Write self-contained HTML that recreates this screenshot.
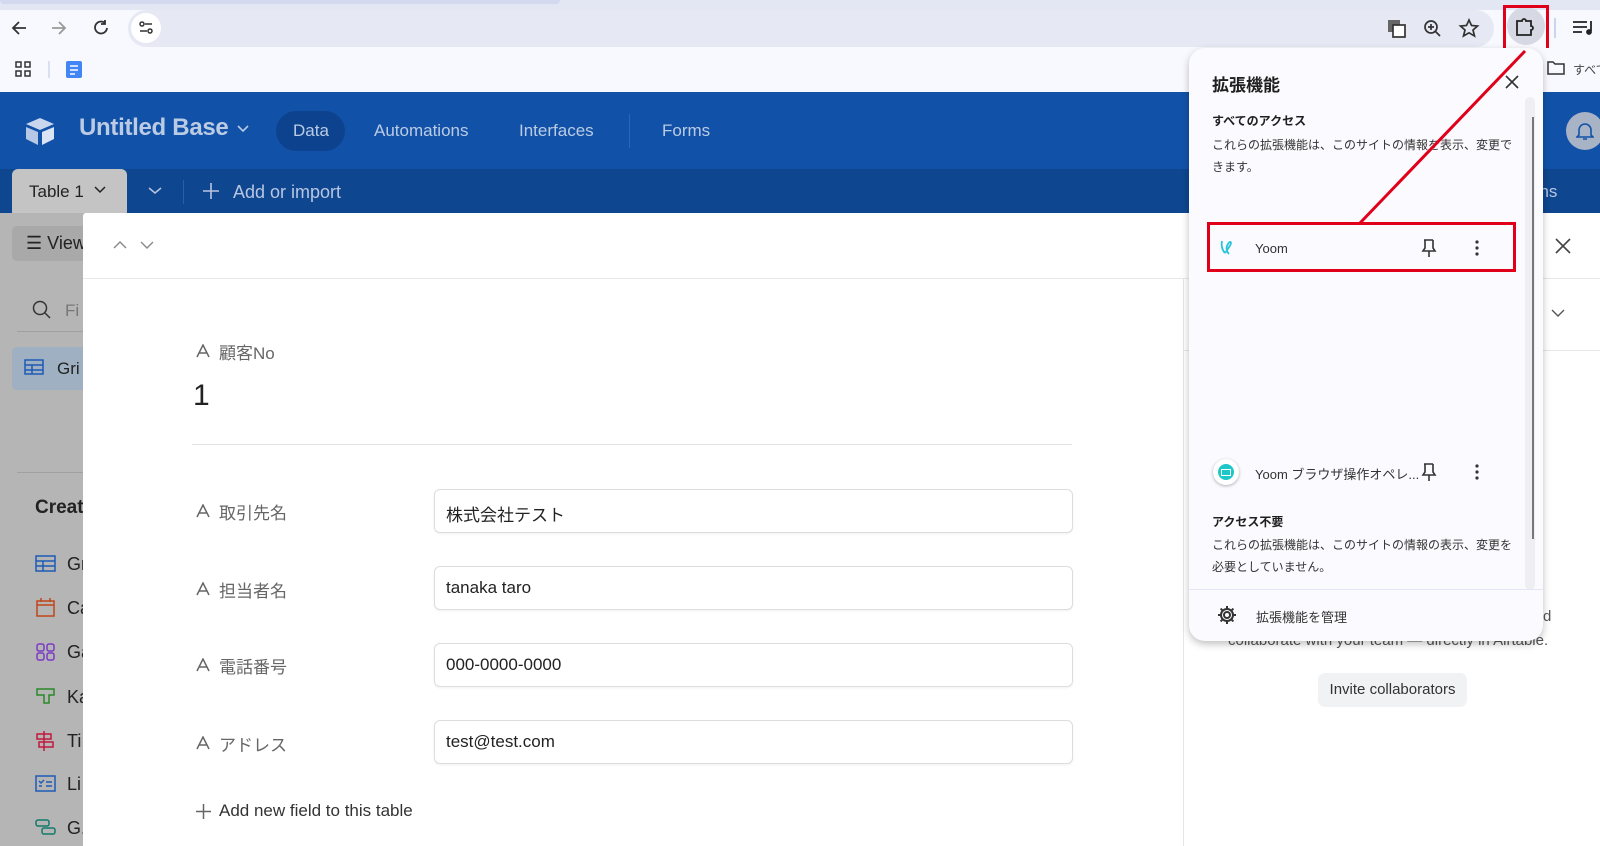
<!DOCTYPE html>
<html><head><meta charset="utf-8"><style>
*{margin:0;padding:0;box-sizing:border-box}
body{width:1600px;height:846px;overflow:hidden;position:relative;background:#bcbcbc;font-family:"Liberation Sans","Noto Sans CJK JP",sans-serif;}
.a{position:absolute}
.jp{font-family:"Liberation Sans","Noto Sans CJK JP",sans-serif}
.lbl{position:absolute;left:196px;font-size:17px;color:#666;display:flex;align-items:center;gap:8px}
.inp{position:absolute;left:434px;width:639px;height:44px;border:1px solid #ddd;border-radius:6px;background:#fff;font-size:17px;color:#222;padding:11px 11px;box-shadow:0 1px 2px rgba(0,0,0,.06)}
.si{position:absolute;left:35px;font-size:18px;color:#222}
</style></head><body>
<div class="a" style="left:0;top:0;width:1600px;height:10px;background:#e3e7f3"></div>
<div class="a" style="left:0;top:0;width:560px;height:4px;background:#d3d9ee;border-radius:0 0 8px 8px"></div>
<div class="a" style="left:0;top:10px;width:1600px;height:38px;background:#f8f9fe"></div>
<svg class="a" style="left:10px;top:18px" width="110" height="20" fill="none" stroke="#333" stroke-width="1.8">
<path d="M16 10H3M9 4L3 10l6 6"/><path d="M42 10h13M49 4l6 6-6 6" stroke="#999"/><path d="M95 5a6 6 0 1 0 2 5M95 2v4h-4"/></svg>
<div class="a" style="left:128px;top:10px;width:1366px;height:37px;background:#e6e9f4;border-radius:19px"></div>
<div class="a" style="left:131px;top:13px;width:30px;height:30px;background:#fff;border-radius:15px"></div>
<svg class="a" style="left:137px;top:19px" width="18" height="18" fill="none" stroke="#333" stroke-width="1.5"><circle cx="5" cy="5" r="2"/><path d="M8 5h7M3 12h7"/><circle cx="13" cy="12" r="2"/></svg>
<svg class="a" style="left:1386px;top:18px" width="100" height="22" fill="none" stroke="#333" stroke-width="1.7">
<rect x="2" y="2" width="12" height="12" fill="#666" stroke="none"/><rect x="7" y="7" width="12" height="12" fill="#fff"/>
<circle cx="45" cy="9" r="6"/><path d="M49 13l5 5M45 6v6M42 9h6"/>
<path d="M83 2l2.5 5.5 6 .5-4.5 4 1.5 6-5.5-3.2-5.5 3.2 1.5-6-4.5-4 6-.5z"/></svg>
<div class="a" style="left:1507px;top:7px;width:38px;height:38px;border-radius:19px;background:#d6d9e3"></div>
<svg class="a" style="left:1514px;top:16px" width="24" height="22" fill="none" stroke="#222" stroke-width="1.8"><path d="M3 5h5a2 2 0 0 1 4 0h5v5a2 2 0 0 1 0 4v5H3z"/></svg>
<div class="a" style="left:1503px;top:5px;width:46px;height:46px;border:3px solid #e0001a"></div>
<div class="a" style="left:1554px;top:18px;width:2px;height:20px;background:#c9d4f0"></div>
<svg class="a" style="left:1572px;top:19px" width="24" height="18" fill="none" stroke="#222" stroke-width="1.8"><path d="M1 3h14M1 8h14M1 13h9M19 2v10"/><circle cx="17" cy="13" r="2" fill="#222"/></svg>
<div class="a" style="left:0;top:48px;width:1600px;height:44px;background:#f8f9fe"></div>
<svg class="a" style="left:15px;top:61px" width="80" height="18" fill="none" stroke="#333" stroke-width="1.5"><rect x="1" y="1" width="5" height="5"/><rect x="10" y="1" width="5" height="5"/><rect x="1" y="10" width="5" height="5"/><rect x="10" y="10" width="5" height="5"/><path d="M34 0v17" stroke="#cfd8ee"/><rect x="51" y="0" width="16" height="17" rx="2" fill="#4285f4" stroke="none"/><path d="M55 5h8M55 9h8M55 13h5" stroke="#fff"/></svg>
<svg class="a" style="left:1546px;top:60px" width="20" height="16" fill="none" stroke="#333" stroke-width="1.5"><path d="M2 2h5l2 2h9v10H2z"/></svg>
<div class="a jp" style="left:1573px;top:61px;font-size:12px;color:#444;white-space:nowrap">すべて</div>
<div class="a" style="left:0;top:92px;width:1600px;height:78px;background:#1152a8"></div>
<svg class="a" style="left:24px;top:116px" width="32" height="30"><path d="M16 2L30 8 16 14 2 8z" fill="#c9d6ee"/><path d="M2 11l12 5v13L2 23z" fill="#b7c7e6"/><path d="M18 16l12-5v12l-12 6z" fill="#dbe4f4"/></svg>
<div class="a" style="left:79px;top:114px;font-size:24px;font-weight:bold;color:#bccbe4;letter-spacing:-.3px">Untitled Base</div>
<svg class="a" style="left:236px;top:124px" width="14" height="10" fill="none" stroke="#bccbe4" stroke-width="1.6"><path d="M2 2l5 5 5-5"/></svg>
<div class="a" style="left:276px;top:111px;width:69px;height:40px;border-radius:20px;background:#0d438e"></div>
<div class="a" style="left:293px;top:121px;font-size:17px;color:#bccbe4">Data</div>
<div class="a" style="left:374px;top:121px;font-size:17px;color:#bccbe4">Automations</div>
<div class="a" style="left:519px;top:121px;font-size:17px;color:#bccbe4">Interfaces</div>
<div class="a" style="left:629px;top:114px;width:1px;height:34px;background:#2d66b4"></div>
<div class="a" style="left:662px;top:121px;font-size:17px;color:#bccbe4">Forms</div>
<div class="a" style="left:1566px;top:112px;width:38px;height:38px;border-radius:19px;background:#a8b3c6"></div>
<svg class="a" style="left:1576px;top:121px" width="18" height="20" fill="none" stroke="#1152a8" stroke-width="1.6"><path d="M3 14V9a6 6 0 0 1 12 0v5l2 2H1zM7 18h4"/></svg>
<div class="a" style="left:0;top:169px;width:1600px;height:44px;background:#0e4690"></div>
<div class="a" style="left:12px;top:169px;width:115px;height:45px;background:#c4c4c4;border-radius:6px 6px 0 0"></div>
<div class="a" style="left:29px;top:182px;font-size:17px;color:#222">Table 1</div>
<svg class="a" style="left:94px;top:186px" width="12" height="8" fill="none" stroke="#222" stroke-width="1.5"><path d="M1 1l5 5 5-5"/></svg>
<svg class="a" style="left:148px;top:187px" width="14" height="8" fill="none" stroke="#b8c6e2" stroke-width="1.5"><path d="M1 1l6 5 6-5"/></svg>
<div class="a" style="left:183px;top:180px;width:1px;height:24px;background:#2a5fa8"></div>
<svg class="a" style="left:202px;top:182px" width="18" height="18" stroke="#b8c6e2" stroke-width="1.6"><path d="M9 1v16M1 9h16"/></svg>
<div class="a" style="left:233px;top:182px;font-size:18px;color:#b8c6e2">Add or import</div>
<div class="a" style="left:1530px;top:182px;font-size:17px;color:#b8c6e2">ons</div>
<div class="a" style="left:0;top:213px;width:84px;height:633px;background:#b5b5b5"></div>
<div class="a" style="left:12px;top:226px;width:80px;height:35px;background:#a9a9a9;border-radius:5px"></div>
<div class="a" style="left:26px;top:233px;font-size:18px;color:#222">☰ View</div>
<svg class="a" style="left:32px;top:300px" width="20" height="20" fill="none" stroke="#333" stroke-width="1.5"><circle cx="8" cy="8" r="6.5"/><path d="M13 13l5 5"/></svg>
<div class="a" style="left:65px;top:301px;font-size:17px;color:#777">Fi</div>
<div class="a" style="left:17px;top:331px;width:70px;height:1px;background:#a0a0a0"></div>
<div class="a" style="left:12px;top:347px;width:80px;height:43px;background:#9eb0c2;border-radius:5px"></div>
<svg class="a" style="left:24px;top:359px" width="20" height="16" fill="none" stroke="#1d5bb5" stroke-width="1.5"><rect x="1" y="1" width="18" height="14"/><path d="M1 6h18M1 11h18M8 6v9"/></svg>
<div class="a" style="left:57px;top:359px;font-size:17px;color:#222">Gri</div>
<div class="a" style="left:17px;top:472px;width:70px;height:1px;background:#a0a0a0"></div>
<div class="a" style="left:35px;top:497px;font-size:19px;font-weight:bold;color:#222">Creat</div>
<svg class="a" style="left:35px;top:555px" width="22" height="290" fill="none" stroke-width="1.5">
<g stroke="#1d5bb5"><rect x="1" y="1" width="19" height="15"/><path d="M1 6h19M1 11h19M8 6v10"/></g>
<g stroke="#c0461a" transform="translate(0,43)"><rect x="2" y="3" width="17" height="15"/><path d="M2 7h17M6 0v4M15 0v4"/></g>
<g stroke="#7a3bc4" transform="translate(0,88)"><rect x="2" y="1" width="7" height="7" rx="2"/><rect x="12" y="1" width="7" height="7" rx="2"/><rect x="2" y="10" width="7" height="7" rx="2"/><rect x="12" y="10" width="7" height="7" rx="2"/></g>
<g stroke="#2a8a2a" transform="translate(0,132)"><path d="M2 2h17v6h-5v8h-5V8H2z"/></g>
<g stroke="#c0183c" transform="translate(0,176)"><path d="M9 0v20M2 3h14v5H2zM4 11h14v5H4z"/></g>
<g stroke="#1d5bb5" transform="translate(0,220)"><rect x="1" y="1" width="19" height="15"/><path d="M4 6l2 2 3-3M11 7h6M4 11h3M11 11h6"/></g>
<g stroke="#137a6a" transform="translate(0,264)"><rect x="1" y="1" width="13" height="6" rx="2"/><rect x="7" y="9" width="13" height="6" rx="2"/></g>
</svg>
<div class="si" style="left:67px;top:554px">Gr</div><div class="si" style="left:67px;top:598px">Ca</div><div class="si" style="left:67px;top:642px">Ga</div><div class="si" style="left:67px;top:687px">Ka</div><div class="si" style="left:67px;top:731px">Ti</div><div class="si" style="left:67px;top:774px">Li</div><div class="si" style="left:67px;top:818px">G.</div>
<div class="a" style="left:83px;top:213px;width:1517px;height:633px;background:#fff;border-top-left-radius:3px"></div>
<div class="a" style="left:83px;top:278px;width:1517px;height:1px;background:#e8e8e8"></div>
<svg class="a" style="left:113px;top:240px" width="45" height="10" fill="none" stroke="#888" stroke-width="1.4"><path d="M1 8l6-6 6 6M28 2l6 6 6-6"/></svg>
<svg class="a" style="left:1555px;top:238px" width="16" height="16" stroke="#444" stroke-width="1.6"><path d="M1 1l14 14M15 1L1 15"/></svg>
<div class="a" style="left:1183px;top:279px;width:1px;height:567px;background:#e6e6e6"></div>
<div class="a" style="left:1183px;top:350px;width:417px;height:1px;background:#e6e6e6"></div>
<svg class="a" style="left:1551px;top:309px" width="14" height="8" fill="none" stroke="#555" stroke-width="1.4"><path d="M1 1l6 6 6-6"/></svg>
<svg class="a" style="left:196px;top:344px" width="14" height="14" fill="none" stroke="#666" stroke-width="1.5"><path d="M1 13L7 1l6 12M3 9h8"/></svg>
<div class="a jp" style="left:219px;top:339px;font-size:17px;color:#666">顧客No</div>
<div class="a" style="left:193px;top:379px;font-size:30px;color:#222">1</div>
<div class="a" style="left:192px;top:444px;width:880px;height:1px;background:#e2e2e2"></div>
<svg class="a" style="left:196px;top:504px" width="14" height="14" fill="none" stroke="#666" stroke-width="1.5"><path d="M1 13L7 1l6 12M3 9h8"/></svg>
<div class="a jp" style="left:219px;top:499px;font-size:17px;color:#666">取引先名</div>
<div class="inp jp" style="top:489px">株式会社テスト</div>
<svg class="a" style="left:196px;top:582px" width="14" height="14" fill="none" stroke="#666" stroke-width="1.5"><path d="M1 13L7 1l6 12M3 9h8"/></svg>
<div class="a jp" style="left:219px;top:577px;font-size:17px;color:#666">担当者名</div>
<div class="inp" style="top:566px">tanaka taro</div>
<svg class="a" style="left:196px;top:658px" width="14" height="14" fill="none" stroke="#666" stroke-width="1.5"><path d="M1 13L7 1l6 12M3 9h8"/></svg>
<div class="a jp" style="left:219px;top:653px;font-size:17px;color:#666">電話番号</div>
<div class="inp" style="top:643px">000-0000-0000</div>
<svg class="a" style="left:196px;top:736px" width="14" height="14" fill="none" stroke="#666" stroke-width="1.5"><path d="M1 13L7 1l6 12M3 9h8"/></svg>
<div class="a jp" style="left:219px;top:731px;font-size:17px;color:#666">アドレス</div>
<div class="inp" style="top:720px">test@test.com</div>
<svg class="a" style="left:195px;top:803px" width="17" height="17" stroke="#666" stroke-width="1.5"><path d="M8.5 1v15M1 8.5h15"/></svg>
<div class="a" style="left:219px;top:801px;font-size:17px;color:#333">Add new field to this table</div>
<div class="a" style="left:1543px;top:608px;font-size:15px;color:#555">d</div>
<div class="a" style="left:1228px;top:632px;font-size:15px;color:#555">collaborate with your team — directly in Airtable.</div>
<div class="a" style="left:1318px;top:673px;width:149px;height:34px;background:#f1f2f4;border-radius:7px;font-size:15px;color:#333;text-align:center;line-height:34px">Invite collaborators</div>
<div class="a" style="left:1189px;top:48px;width:354px;height:593px;background:#fbfaff;border-radius:16px;box-shadow:0 3px 8px rgba(0,0,0,.25)"></div>
<div class="a jp" style="left:1212px;top:71px;font-size:17px;font-weight:bold;color:#1f1f1f">拡張機能</div>
<svg class="a" style="left:1505px;top:75px" width="14" height="14" stroke="#333" stroke-width="1.6"><path d="M1 1l12 12M13 1L1 13"/></svg>
<div class="a" style="left:1525px;top:97px;width:10px;height:493px;background:#efeff3;border-radius:5px"></div>
<div class="a" style="left:1532px;top:117px;width:2px;height:422px;background:#777"></div>
<div class="a jp" style="left:1212px;top:112px;font-size:12px;font-weight:bold;color:#1f1f1f">すべてのアクセス</div>
<div class="a jp" style="left:1212px;top:134px;width:300px;font-size:12px;line-height:22px;color:#333">これらの拡張機能は、このサイトの情報を表示、変更できます。</div>
<svg class="a" style="left:1219px;top:239px" width="16" height="18" fill="none" stroke="#2bc4d8" stroke-width="1.8"><path d="M3 2c-1 4 0 9 3 12M6 14c3-4 6-8 6-10s-2-1-3 1c-2 3-2 7 1 10"/></svg>
<div class="a" style="left:1255px;top:241px;font-size:13px;color:#333">Yoom</div>
<svg class="a" style="left:1420px;top:238px" width="80" height="20" fill="none" stroke="#333" stroke-width="1.6"><path d="M4 2h9M5 2v8l-2 3h12l-2-3V2M9 13v6"/><g fill="#333" stroke="none"><circle cx="57" cy="4" r="1.6"/><circle cx="57" cy="10" r="1.6"/><circle cx="57" cy="16" r="1.6"/></g></svg>
<div class="a" style="left:1207px;top:222px;width:309px;height:50px;border:3px solid #e0001a"></div>
<svg class="a" style="left:0;top:0;pointer-events:none" width="1600" height="846"><path d="M1360 223L1525 51" stroke="#e0001a" stroke-width="3"/></svg>
<div class="a" style="left:1213px;top:459px;width:26px;height:26px;border-radius:13px;background:#fff;box-shadow:0 1px 3px rgba(0,0,0,.3)"></div>
<div class="a" style="left:1218px;top:464px;width:16px;height:16px;border-radius:8px;background:#1ec8c8"></div>
<div class="a" style="left:1221px;top:469px;width:10px;height:7px;border:1px solid #fff"></div>
<div class="a jp" style="left:1255px;top:464px;font-size:13px;color:#333">Yoom ブラウザ操作オペレ...</div>
<svg class="a" style="left:1420px;top:462px" width="80" height="20" fill="none" stroke="#333" stroke-width="1.6"><path d="M4 2h9M5 2v8l-2 3h12l-2-3V2M9 13v6"/><g fill="#333" stroke="none"><circle cx="57" cy="4" r="1.6"/><circle cx="57" cy="10" r="1.6"/><circle cx="57" cy="16" r="1.6"/></g></svg>
<div class="a jp" style="left:1212px;top:513px;font-size:12px;font-weight:bold;color:#1f1f1f">アクセス不要</div>
<div class="a jp" style="left:1212px;top:534px;width:300px;font-size:12px;line-height:22px;color:#333">これらの拡張機能は、このサイトの情報の表示、変更を必要としていません。</div>
<div class="a" style="left:1189px;top:589px;width:354px;height:1px;background:#e3e7f5"></div>
<svg class="a" style="left:1217px;top:605px" width="20" height="20" fill="none" stroke="#333" stroke-width="2"><circle cx="10" cy="10" r="3"/><path d="M10 1v3M10 16v3M1 10h3M16 10h3M3.6 3.6l2.1 2.1M14.3 14.3l2.1 2.1M3.6 16.4l2.1-2.1M14.3 5.7l2.1-2.1"/><circle cx="10" cy="10" r="6"/></svg>
<div class="a jp" style="left:1256px;top:607px;font-size:13px;color:#333">拡張機能を管理</div>
</body></html>
